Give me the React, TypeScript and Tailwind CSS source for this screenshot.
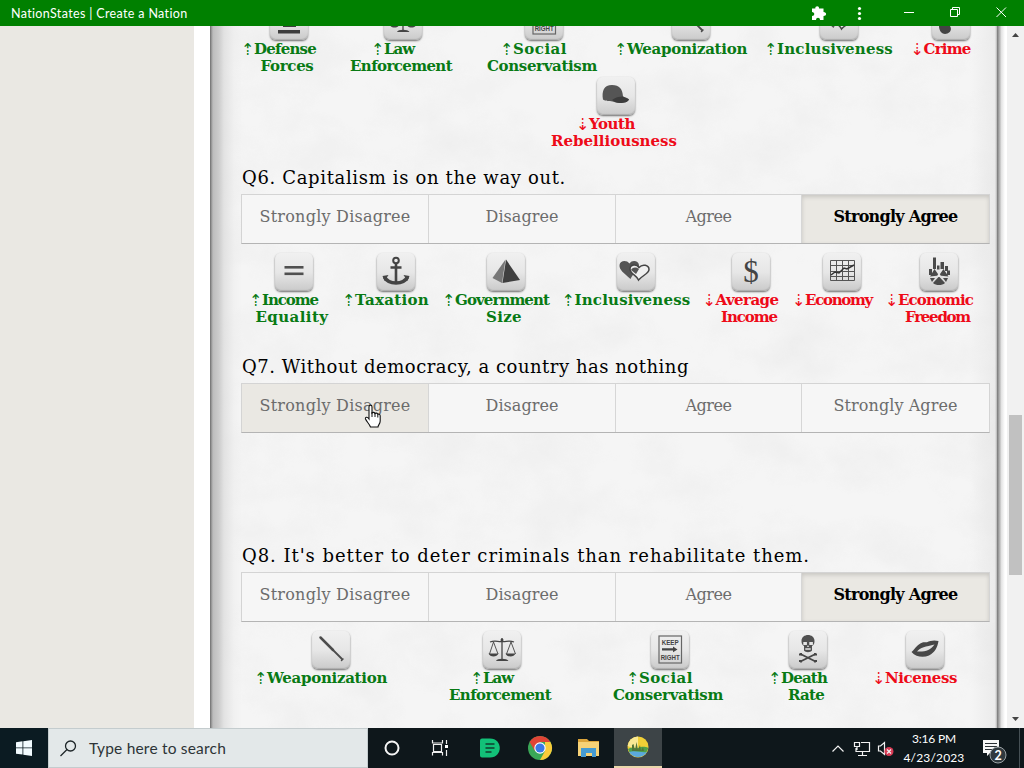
import { useLayoutEffect, useRef, type ReactNode } from "react";

const TYPE = "font-['DejaVu_Serif',serif]";
const HAND = "font-['Lato',sans-serif]";

/** Spreads the letters of one line so that it fills the given width. */
function Fit({ w, children, className = "" }: { w: number; children: string; className?: string }) {
  const ref = useRef<HTMLSpanElement>(null);
  useLayoutEffect(() => {
    const el = ref.current;
    if (!el) return;
    el.style.letterSpacing = "0px";
    const natural = el.getBoundingClientRect().width;
    el.style.letterSpacing = `${(w - natural) / children.length}px`;
  }, [w, children]);
  return (
    <span ref={ref} className={`inline-block whitespace-pre ${className}`}>
      {children}
    </span>
  );
}

const WIDTHS: Record<string, number> = {
  Defense: 62, Forces: 53, Law: 30, Enforcement: 102, Social: 54, Conservatism: 110,
  Weaponization: 120, Inclusiveness: 116, Crime: 47, Youth: 46, Rebelliousness: 126,
  Income: 56, Equality: 73, Taxation: 74, Government: 94, Size: 36, Average: 63,
  Economy: 67, Economic: 75, Freedom: 65, Death: 46, Rate: 36, Niceness: 72,
};

const glyphs: Record<string, ReactNode> = {
  equals: (
    <g fill="#505050">
      <rect x="9.5" y="13" width="19" height="2.6" />
      <rect x="9.5" y="19.5" width="19" height="2.6" />
    </g>
  ),
  anchor: (
    <g fill="none" stroke="#444" strokeWidth="2.6">
      <circle cx="19" cy="7.5" r="2.8" strokeWidth="2" />
      <path d="M19 10.5V30M13.5 14.5h11" />
      <path d="M7.5 24c2 4 6 6 11.500 6s9.500-2 11.500-6" strokeWidth="3.600" />
      <path d="M5.500 23l6-1-4 6zM32.500 23l-6-1 4 6z" fill="#444" stroke="none" />
    </g>
  ),
  pyramid: (
    <g>
      <path d="M18.500 6.500L5.500 25l9.500 5z" fill="#777" />
      <path d="M19 6.500L15.500 30 33 27z" fill="#3f3f3f" />
    </g>
  ),
  hearts: (
    <g>
      <path d="M13.500 26C7 20 2 17 2.500 12c.5-4.500 7-5.500 10-1.500 2.500-4 9-3 9.500 1.500.4 4-5.500 8-8.500 14z" fill="#555" />
      <path d="M21.500 27c-2-5-8.500-6-8.500-11 0-4.500 6.500-5.500 9-1.500 3.500-4 10-2.500 10 2 0 4-6 5.500-10.500 10.500z" fill="#efefef" stroke="#444" strokeWidth="1.500" />
      <path d="M14 17c2-3 5-3 8-1l-3 5z" fill="#555" />
    </g>
  ),
  dollar: (
    <text x="19" y="28.500" textAnchor="middle" fontSize="31" fontWeight="normal" fill="#444" fontFamily="Liberation Serif, serif">$</text>
  ),
  chart: (
    <g fill="none" stroke="#555" strokeWidth="1">
      <path d="M7.500 7.500h24v20h-24zM7.500 12.500h24M7.500 18.500h24M7.500 23.500h24M13.500 7.500v20M19.500 7.500v20M25.500 7.500v20" />
      <path d="M8 22l4-3 4 1 5-5 3 1 7-4" stroke="#333" strokeWidth="1.500" />
    </g>
  ),
  hand: (
    <g fill="#4a4a4a">
      <path d="M13 4.500h3V16h-3zM17 12.500h2.500v4H17zM20.500 9H24v7h-3.500zM25 13h3v5h-3zM9 16h3v6H9zM27 17.500h3V22h-3z" />
      <path d="M19 22.500L14.500 16 10 23.500zM19 22.500l4.500-6.500 5 7.500zM19 23.500l-6 6.500c3 2.700 9 2.700 12 0zM10 25h5l-3 4zM28 25h-5l3 4z" />
      <circle cx="19" cy="22.500" r="1.500" fill="#eee" />
    </g>
  ),
  bat: (
    <g stroke="#4c4c4c" strokeLinecap="round">
      <path d="M8.500 6.500L21 19" strokeWidth="2.500" />
      <path d="M20 18l10 10" strokeWidth="1.800" />
      <path d="M29.500 29.500l1.500-1.500" strokeWidth="1.500" />
    </g>
  ),
  scales: (
    <g fill="none" stroke="#444" strokeWidth="1.300">
      <path d="M19 7v22M7 11c5-2 8 0 12-.5 4 .5 7-1.500 12 .5" />
      <path d="M10.500 11L6.500 23M10.500 11l4.500 12M28 11l-4.500 12M28 11l4.500 12" strokeWidth="0.900" />
      <path d="M5.500 22.500h10c-1.500 4-8.500 4-10 0zM22.500 22.500h10c-1.500 4-8.500 4-10 0zM13 30c1-3 11-3 12.500 0z" fill="#444" stroke="none" />
      <circle cx="19" cy="9" r="1.500" fill="#444" stroke="none" />
    </g>
  ),
  sign: (
    <g>
      <rect x="8" y="5" width="22.500" height="27" fill="none" stroke="#666" strokeWidth="1.200" />
      <g fill="#444" fontFamily="Liberation Sans, sans-serif" fontSize="7.500" fontWeight="bold" textAnchor="middle">
        <text x="19.200" y="13.500" textLength="17" lengthAdjust="spacingAndGlyphs">KEEP</text>
        <text x="19.200" y="28.500" textLength="19" lengthAdjust="spacingAndGlyphs">RIGHT</text>
      </g>
      <path d="M11 17.300h11v-1.800l4.500 2.900-4.500 2.900v-1.800H11z" fill="#444" />
    </g>
  ),
  skull: (
    <g>
      <path d="M12.500 10c0-8 13-8 13 0 0 3-1 4-2.500 5v4.500c-1.500 2.200-6.500 2.200-8 0V15c-1.500-1-2.500-2-2.500-5z" fill="#505050" />
      <path d="M14.300 11h3.600v3h-3.600zM20.300 11h3.600v3h-3.600zM19 14l1 2h-2zM16.300 17.300h5.400v1.400h-5.400z" fill="#e5e5e5" />
      <path d="M11.500 23l15 7.500M26.500 23l-15 7.500" stroke="#454545" strokeWidth="1.800" />
      <path d="M12 22v2.500M10 23.500h3M26 22v2.500M28 23.500h-3M12 29v2.500M10 30h3M26 29v2.500M28 30h-3" stroke="#454545" strokeWidth="1.800" />
    </g>
  ),
  lips: (
    <g>
      <path d="M5.500 21c4-3.500 6-8 11-9.500 2-.6 3 .2 4.500-.3 3-1.500 7-2.500 11.500-1.200-1 6-3.500 11.500-9.500 14.500-6 2.500-13 1.500-17.500-3.500z" fill="#474747" />
      <path d="M11 20.500c3-4 9-5 17.500-7-4 5.500-9 7.500-17.500 7z" fill="#e0e0e0" />
    </g>
  ),
  cap: (
    <g>
      <path d="M6 22.500C4.500 14 7 8 15 8c7.500 0 10.500 4 11 11.500 2 1 5 1.500 6 3-1 2.500-5 3.500-9 3.500-3 0-5-1-7.500-1.500-4-.5-6 0-9.500-2z" fill="#555" />
      <path d="M15 23c3-2.500 7-3.500 11-3.500l6 3c-1 2.500-5 3.500-9 3.500-3 0-5.500-1-8-3z" fill="#3c3c3c" />
    </g>
  ),
  tank: <path d="M13 15h13v10H13zM8 28h22v3.500H8z" fill="#3c3c3c" />,
  mask: <path d="M7 24h11c3 5-2 8-5 8-3 0-6-3-6-8z" fill="#444" />,
};

function Tile({ icon }: { icon: string }) {
  return (
    <div className="h-[38px] w-[38px] rounded-[6px] bg-linear-to-b from-[#f0f0f0] via-[#e7e7e7] to-[#cacaca] shadow-[0_1px_2px_rgba(0,0,0,0.55),inset_0_-1px_1px_rgba(0,0,0,0.15)]">
      <svg width="38" height="38" viewBox="0 0 38 38">
        {glyphs[icon]}
      </svg>
    </div>
  );
}

type StatData = [icon: string, up: boolean, first: string, second?: string];

function Stat({ data: [icon, up, first, second] }: { data: StatData }) {
  return (
    <div className={`flex flex-col items-center text-[15px] leading-[17px] font-bold ${TYPE} ${up ? "text-[#087a14]" : "text-[#ee0a18]"}`}>
      <Tile icon={icon} />
      <div className="mt-px mr-[17px] flex whitespace-nowrap">
        <span className="w-[10px] font-['DejaVu_Sans',sans-serif] text-[16px] font-normal -indent-[3px]">{up ? "⇡" : "⇣"}</span>
        <Fit w={WIDTHS[first]}>{first}</Fit>
      </div>
      {second && <Fit w={WIDTHS[second]} className="mr-[3px]">{second}</Fit>}
    </div>
  );
}

const ANSWERS: [string, number][] = [
  ["Strongly Disagree", 151],
  ["Disagree", 73],
  ["Agree", 46],
  ["Strongly Agree", 124],
];

function Question({ title, width, chosen, hovered, children }: { title: string; width: number; chosen?: number; hovered?: number; children?: ReactNode }) {
  return (
    <section className="h-[189px]">
      <h2 className={`h-[31px] pl-px text-[18px] leading-[30px] text-black ${TYPE}`}>
        <Fit w={width}>{title}</Fit>
      </h2>
      <div className="grid h-[50px] w-[749px] grid-cols-[186px_187px_186px_188px] border border-[#d4d4d4] border-b-[#b4b4b4]">
        {ANSWERS.map(([text, w], i) => (
          <div
            key={text}
            className={`relative flex justify-center pt-[12px] text-[16px] leading-[20px] ${TYPE} ${i > 0 ? "border-l border-[#d6d6d6]" : ""} ${
              i === chosen
                ? "bg-[#eae8e3] font-bold text-black shadow-[inset_0_2px_4px_rgba(0,0,0,0.15)]"
                : i === hovered
                  ? "bg-[#eae8e3] text-[#6c6c6c]"
                  : "bg-[#f6f6f6] text-[#6c6c6c]"
            }`}
          >
            <Fit w={w}>{text}</Fit>
            {i === hovered && (
              <svg className="absolute top-[20px] left-[121px]" width="20" height="25" viewBox="0 0 20 25">
                <path d="M6 15V3c0-2.500 3-2.500 3 0v6c1-1 2.500-.8 3 .5 1-.8 2.300-.4 2.800.8 1.200-.5 2.400.2 2.400 1.700v5c0 3-2.200 4-2.200 6H7.500C6.500 20 3.500 17.500 2.500 15c-.5-2 1.700-2.500 3.500 0z" fill="#fff" stroke="#111" strokeWidth="1.100" />
                <path d="M9 8v5M12 9v4M14.800 10.500v3" stroke="#111" strokeWidth="1" />
              </svg>
            )}
          </div>
        ))}
      </div>
      <div className="pt-[9px]">{children}</div>
    </section>
  );
}

const ROW5: StatData[] = [
  ["tank", true, "Defense", "Forces"],
  ["scales", true, "Law", "Enforcement"],
  ["sign", true, "Social", "Conservatism"],
  ["bat", true, "Weaponization"],
  ["hearts", true, "Inclusiveness"],
  ["mask", false, "Crime"],
];
const ROW6: StatData[] = [
  ["equals", true, "Income", "Equality"],
  ["anchor", true, "Taxation"],
  ["pyramid", true, "Government", "Size"],
  ["hearts", true, "Inclusiveness"],
  ["dollar", false, "Average", "Income"],
  ["chart", false, "Economy"],
  ["hand", false, "Economic", "Freedom"],
];
const ROW8: StatData[] = [
  ["bat", true, "Weaponization"],
  ["scales", true, "Law", "Enforcement"],
  ["sign", true, "Social", "Conservatism"],
  ["skull", true, "Death", "Rate"],
  ["lips", false, "Niceness"],
];

function TitleBar() {
  return (
    <header className={`flex h-[26px] shrink-0 items-center bg-[#008000] pt-[2px] pl-[11px] text-[12.500px] text-white ${HAND}`}>
      <Fit w={177}>NationStates | Create a Nation</Fit>
      <svg className="-mt-[2px] ml-auto" width="224" height="26" viewBox="0 0 224 26">
        <path d="M22 8.500h-3c.5-3-4-3-3.700 0H12V12c3 0 3 4 0 4v4h4c0-3 4-3 4 0h3.500v-4c3.500 0 3.500-4 0-4V8.500z" fill="#fff" />
        <g fill="#fff">
          <circle cx="59.500" cy="8.500" r="1.600" />
          <circle cx="59.500" cy="13.500" r="1.600" />
          <circle cx="59.500" cy="18.500" r="1.600" />
        </g>
        <g fill="none" stroke="#fff" strokeWidth="1">
          <path d="M104 12.500h10M150.500 9.500h7v7h-7zM152.500 9.500v-2h7v7h-2M196.500 7.500l9.500 9.500M206 7.500l-9.500 9.500" />
        </g>
      </svg>
    </header>
  );
}

function Taskbar() {
  return (
    <footer className={`flex h-[40px] shrink-0 bg-[#0e171b] ${HAND}`}>
      <div className="flex w-[48px] items-center justify-center bg-[#0b1b22]">
        <svg width="16" height="16" viewBox="0 0 16 16" fill="#f2fbff">
          <path d="M0 2.200l6.500-.9v6.200H0zM7.300 1.200L16 0v7.500H7.300zM0 8.300h6.500v6.300L0 13.700zM7.300 8.300H16V16l-8.700-1.200z" />
        </svg>
      </div>
      <div className="flex w-[320px] items-center border border-[#c4ccce] bg-[#e3e8e9] pl-[11px] text-[15.500px] text-[#2d3437]">
        <svg width="17" height="17" viewBox="0 0 17 17" fill="none" stroke="#1d2528" strokeWidth="1.300">
          <circle cx="10.500" cy="6" r="5" />
          <path d="M7 9.500L0.500 16" />
        </svg>
        <Fit w={137} className="mt-[2px] ml-[12px]">Type here to search</Fit>
      </div>
      <svg width="246" height="40" viewBox="0 0 246 40">
        <circle cx="24" cy="20" r="6.500" fill="none" stroke="#f5f5f5" strokeWidth="2" />
        <g fill="none" stroke="#eee" strokeWidth="1.200">
          <path d="M64.500 12v3h10v-3M64.500 27.500v-3h10v3M65.500 16.500h8v7h-8zM78.500 12v4M78.500 22v6" />
        </g>
        <rect x="77" y="17" width="3" height="3" fill="#fff" />
        <path d="M114 10.500h8c13 0 13 19 0 19h-8q-2 0-2-2v-15q0-2 2-2z" fill="#12c178" />
        <path d="M117.500 16h9M117.500 20h9M117.500 24h6" stroke="#123c2e" strokeWidth="1.400" />
        <circle cx="172" cy="20" r="12" fill="#3aa757" />
        <path d="M182.400 14A12 12 0 0 1 172 32l5-9 0-9z" fill="#f9cb3a" />
        <path d="M161.600 14l5.400 9 5-9h10.400a12 12 0 0 0-20.800 0z" fill="#df4436" />
        <circle cx="172" cy="20" r="5.700" fill="#fff" />
        <circle cx="172" cy="20" r="4.600" fill="#3b78e7" />
        <path d="M210 11h9l2 2h10v4h-21z" fill="#dca53b" />
        <path d="M210 14h21v14h-21z" fill="#f6d277" />
        <path d="M213 20h15v9h-4v-4h-6v4h-5z" fill="#459bd2" />
      </svg>
      <div className="flex w-[48px] items-center justify-center border-b-2 border-[#e9d6aa] bg-[#3d4447]">
        <svg width="22" height="22" viewBox="0 0 22 22">
          <circle cx="11" cy="11" r="10.500" fill="#f0cf36" />
          <path d="M11 .5A10.500 10.500 0 0 0 .6 10L11 14z" fill="#f8e894" />
          <path d="M1 13c4-3 7 0 10-1s6-2 10.300 0a10.500 10.500 0 0 1-20.300 1z" fill="#4ea04b" />
          <path d="M2 16c6-2 12 1 18 0a10.500 10.500 0 0 1-18 0z" fill="#5ba9db" />
          <path d="M5 15V9l1.500-1L8 14l1.500-8L11 14l2-5 1 6 2-4 1 4z" fill="#527436" />
        </svg>
      </div>
      <div className="ml-auto flex text-[12px] leading-[19px] text-white">
        <svg className="mr-[2px]" width="66" height="40" viewBox="0 0 66 40" fill="none" stroke="#f2f2f2" strokeWidth="1.200">
          <path d="M4.500 23.500l5.500-5.500 5.500 5.500M33 14.500h8.500v9H28V20M34.500 24v3M30 27.500h9M26.500 14.500h5v4h-5zM29 19v3" />
          <path d="M50.500 18v5h2l4 3.500V14.500l-4 3.500z" />
          <circle cx="61" cy="23.500" r="4.500" fill="#d83b55" stroke="none" />
          <path d="M59 21.500l4 4M63 21.500l-4 4" />
        </svg>
        <div className="flex w-[76px] flex-col items-center pt-[1px]">
          <Fit w={44}>3:16 PM</Fit>
          <Fit w={61}>4/23/2023</Fit>
        </div>
        <svg width="52" height="40" viewBox="0 0 52 40">
          <path d="M11 12h16v13h-9l-3 3v-3h-4z" fill="#f7f7f7" />
          <path d="M13 15.500h12M13 18.500h12M13 21.500h8" stroke="#2b3236" strokeWidth="1" />
          <circle cx="26" cy="27" r="8" fill="#30393e" stroke="#9ba2a5" strokeWidth="1" />
          <text x="26" y="31.500" textAnchor="middle" fontSize="12.500" fontWeight="bold" fill="#fff" fontFamily="Lato, sans-serif">2</text>
          <path d="M47.500 0v40" stroke="#465055" />
        </svg>
      </div>
    </footer>
  );
}

export default function App() {
  return (
    <div className="flex h-[768px] w-[1024px] flex-col overflow-hidden bg-white">
      <TitleBar />
      <main className="flex h-[702px] overflow-hidden">
        <aside className="w-[194px] shrink-0 bg-[#eae8e3]" />
        <div className="relative ml-[16px] h-[702px] w-[787px] shrink-0 overflow-hidden bg-[#f5f5f5]">
          <svg className="absolute inset-0" width="787" height="702">
            <filter id="paper" x="0" y="0" width="100%" height="100%">
              <feTurbulence type="fractalNoise" baseFrequency="0.016 0.02" numOctaves="5" seed="8" />
              <feColorMatrix values="0 0 0 0 0.55  0 0 0 0 0.55  0 0 0 0 0.55  0.7 0 0 0 -0.27" />
            </filter>
            <rect width="787" height="702" filter="url(#paper)" opacity="0.35" />
          </svg>
          <div className="absolute inset-0 bg-[linear-gradient(to_right,#6c6c6c_0px,#8c8c8c_1px,#bdbdbd_3px,#cdcdcd_9px,rgba(222,222,222,0.8)_14px,rgba(235,235,235,0.4)_24px,transparent_32px,transparent_760px,rgba(225,225,225,0.5)_785px,#b5b5b5_787px)]" />
          <div className="relative -mt-[24px] pl-[31px]">
            <div className="grid h-[75px] grid-cols-[95px_133px_149px_145px_151px_73px]">
              {ROW5.map((d) => <Stat key={d[2]} data={d} />)}
            </div>
            <div className="flex h-[86px] w-[749px] justify-center">
              <Stat data={["cap", false, "Youth", "Rebelliousness"]} />
            </div>
            <Question title="Q6. Capitalism is on the way out." width={324} chosen={3}>
              <div className="grid grid-cols-[105px_99px_121px_140px_89px_94px_100px]">
                {ROW6.map((d) => <Stat key={d[2]} data={d} />)}
              </div>
            </Question>
            <Question title="Q7. Without democracy, a country has nothing" width={447} hovered={0} />
            <Question title="Q8. It's better to deter criminals than rehabilitate them." width={568} chosen={3}>
              <div className="grid grid-cols-[179px_163px_173px_103px_131px]">
                {ROW8.map((d) => <Stat key={d[2]} data={d} />)}
              </div>
            </Question>
          </div>
        </div>
        <div className="w-[10px] shrink-0 bg-linear-to-r from-[#777] via-[#e4e4e4] via-45% to-white to-80%" />
        <div className="flex w-[17px] shrink-0 flex-col items-center justify-between bg-[#f1f1f1]">
          <svg className="mt-[6px]" width="7" height="5"><path d="M0 5l3.500-4L7 5z" fill="#444" /></svg>
          <div className="mt-[236px] h-[160px] w-[13px] bg-[#c1c1c1]" />
          <svg className="mb-[6px]" width="7" height="5"><path d="M0 0l3.500 4L7 0z" fill="#444" /></svg>
        </div>
      </main>
      <Taskbar />
    </div>
  );
}
